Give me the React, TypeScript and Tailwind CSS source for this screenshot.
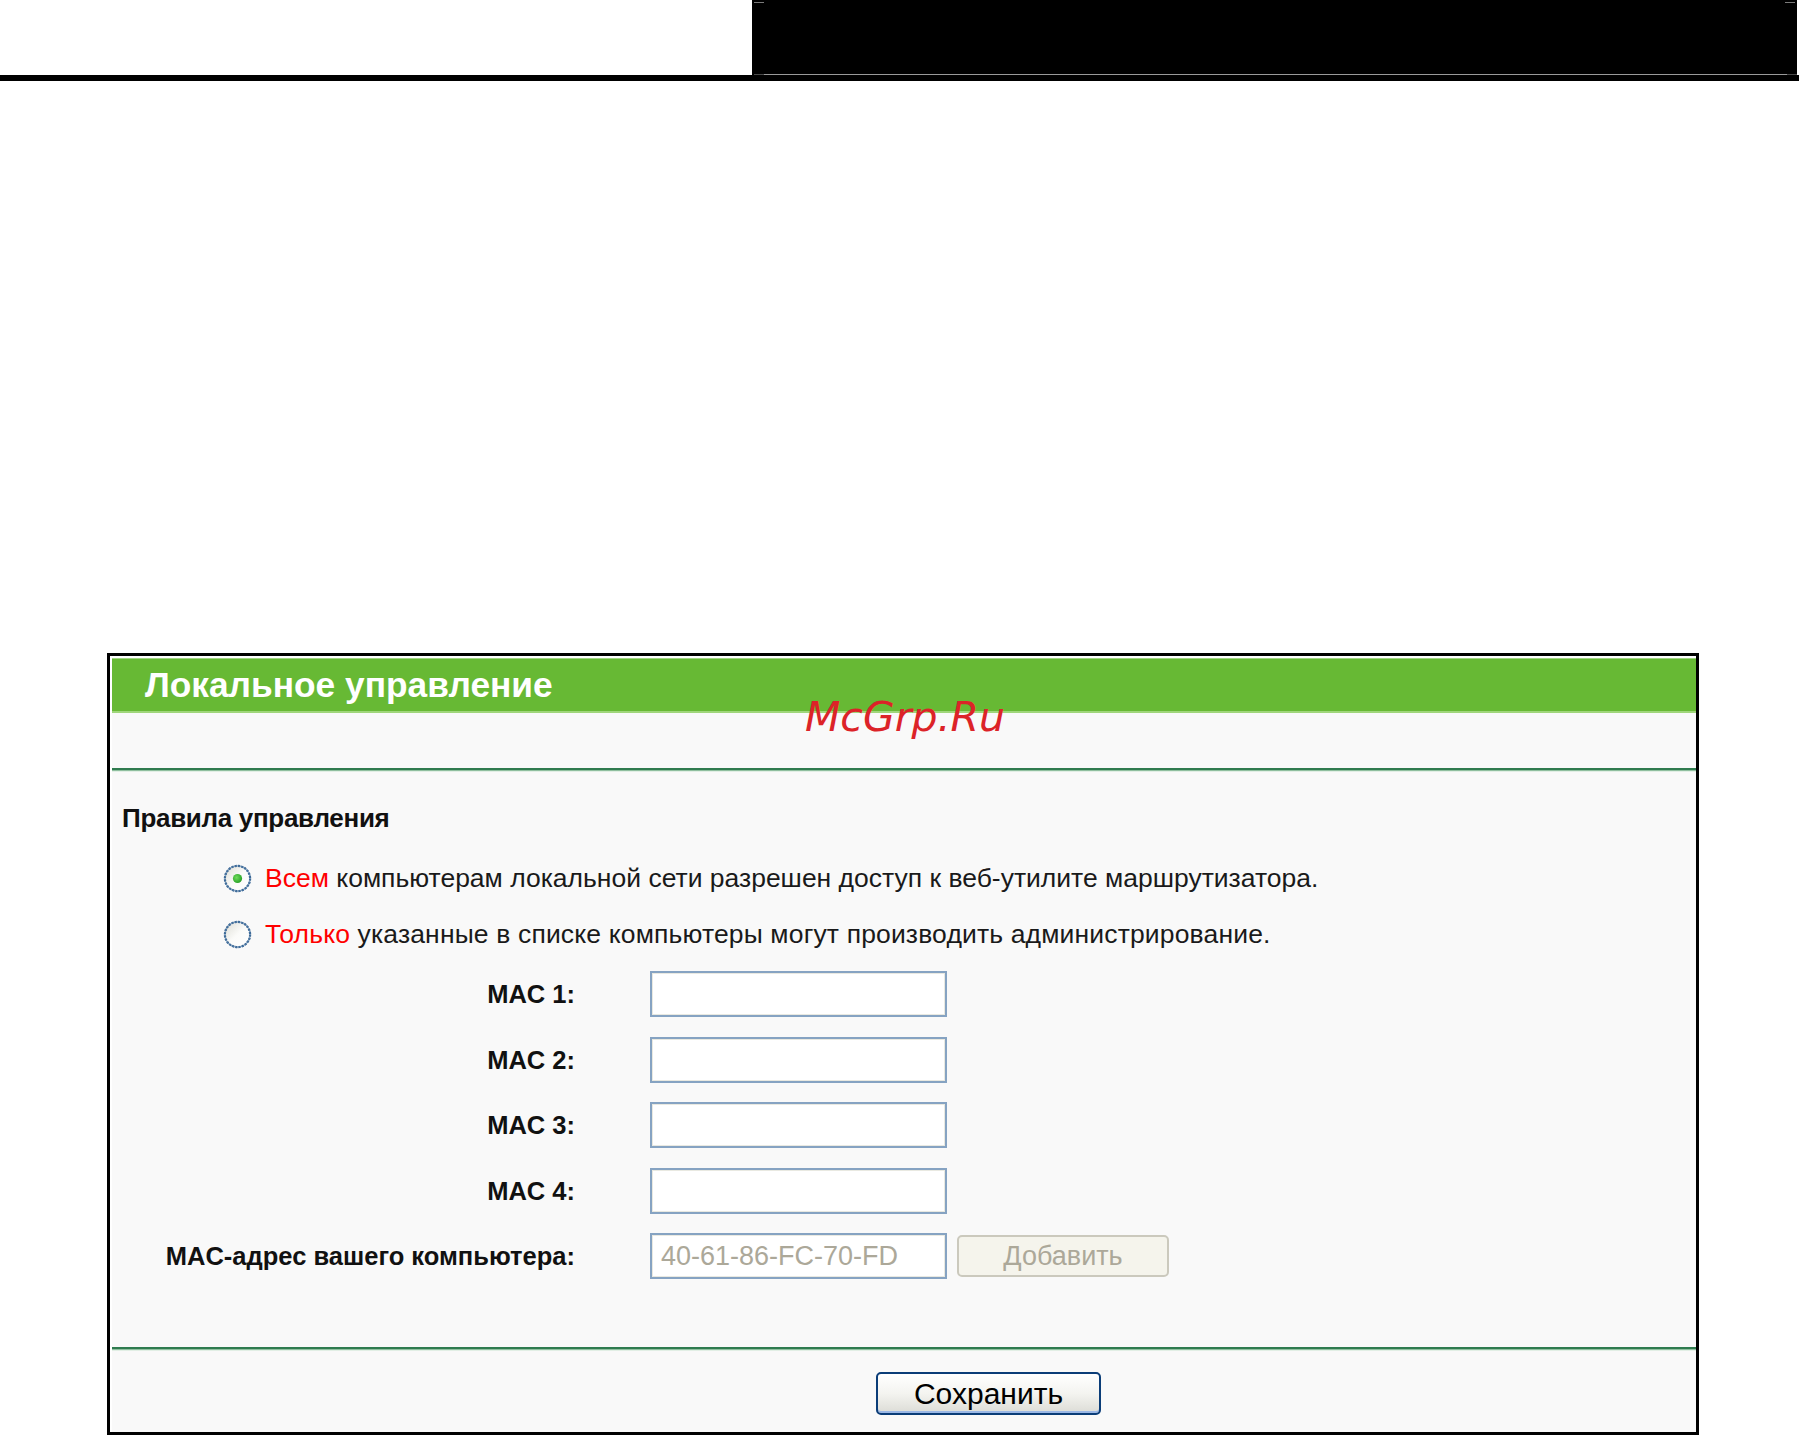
import React from "react";

function Radio({ checked }: { checked: boolean }) {
  return (
    <svg width="29" height="29" viewBox="0 0 29 29" className="shrink-0">
      <defs>
        <linearGradient id={checked ? "rg1" : "rg2"} x1="0" y1="0" x2="1" y2="1">
          <stop offset="0" stopColor="#dcdcd4" />
          <stop offset="0.5" stopColor="#fbfbf9" />
          <stop offset="1" stopColor="#ffffff" />
        </linearGradient>
        <radialGradient id="gdot" cx="0.4" cy="0.4" r="0.7">
          <stop offset="0" stopColor="#6fdc5a" />
          <stop offset="1" stopColor="#1f9a1f" />
        </radialGradient>
      </defs>
      <circle cx="14.5" cy="14.5" r="12.6" fill={`url(#${checked ? "rg1" : "rg2"})`} stroke="#2a5a8c" strokeWidth="2.2" strokeDasharray="2.2 1.1" />
      <circle cx="14.5" cy="14.5" r="12.6" fill="none" stroke="#5d84ad" strokeWidth="1.2" opacity="0.7" />
      {checked && <circle cx="14.5" cy="14.5" r="4.6" fill="url(#gdot)" />}
    </svg>
  );
}

function Separator() {
  return (
    <div className="flex flex-col">
      <div className="h-[2px] bg-[#2f7b4f]" />
      <div className="h-px bg-[#8fbf9f]" />
      <div className="h-px bg-[#e2efe5]" />
    </div>
  );
}

function MacRow({ label, children }: { label: string; children: React.ReactNode }) {
  return (
    <div className="flex items-center h-[46px]">
      <div className="w-[463px] text-right font-bold text-[25.5px] text-[#111] leading-[30px]">{label}</div>
      <div className="ml-[75px] flex items-center">{children}</div>
    </div>
  );
}

function MacInput({ value, disabled }: { value?: string; disabled?: boolean }) {
  return (
    <div className="w-[297px] h-[46px] border-2 border-[#86a3c2] bg-white shadow-[inset_0_0_0_1px_#e9e9e1] flex items-center pl-[9px] text-[27px] text-[#aca899] leading-none">
      {disabled ? value : ""}
    </div>
  );
}

export default function App() {
  return (
    <div className="w-[1799px] h-[1435px] bg-white overflow-hidden" style={{ fontFamily: '"Liberation Sans", Arial, sans-serif' }}>
      {/* top bar */}
      <div className="flex h-[75px]">
        <div className="w-[752px] bg-white" />
        <div className="w-[1045px] bg-black flex flex-col justify-between">
          <div className="flex justify-between pt-[2px] px-[2px]">
            <div className="w-[10px] h-px bg-[#7a7a7a]" />
            <div className="w-[10px] h-px bg-[#7a7a7a]" />
          </div>
          <div className="flex h-px pl-[2px]">
            <div className="w-[10px] bg-[#4a4a4a]" />
            <div className="flex-1 bg-[#9a9a9a]" />
            <div className="w-[10px] bg-[#4a4a4a]" />
          </div>
        </div>
      </div>
      <div className="h-[6px] bg-black" />

      {/* panel */}
      <div className="mt-[572px] ml-[107px] w-[1592px] h-[782px] border-[3px] border-black bg-white">
        <div className="relative pl-[2px] pt-[2px] h-full flex flex-col">
          {/* watermark */}
          <div
            className="absolute left-[695px] top-[41px] text-[41px] leading-[41px] italic text-[#dc2328]"
            style={{ fontFamily: '"DejaVu Sans", sans-serif' }}
          >
            McGrp.Ru
          </div>

          <div className="flex-1 flex flex-col bg-[#f9f9f9]">
            {/* green header */}
            <div className="h-[55px] border-t border-[#a3d585] border-b-2 border-b-[#9fd67a] bg-[#67b934] flex items-center pl-[33px]">
              <span className="text-white font-bold text-[35.3px] leading-[40px]">Локальное управление</span>
            </div>

            <div className="h-[55px]" />
            <Separator />

            <div className="mt-[26px] h-[40px] flex items-center pl-[10px]">
              <span className="font-bold text-[26px] text-[#111] leading-[30px] tracking-[-0.3px]">Правила управления</span>
            </div>

            <div className="mt-[20px] h-[40px] flex items-center pl-[111px] gap-[13px]">
              <Radio checked />
              <span className="text-[26.5px] leading-[30px] text-[#1a1a1a]">
                <span className="text-[#ff0000]">Всем</span> компьютерам локальной сети разрешен доступ к веб-утилите маршрутизатора.
              </span>
            </div>

            <div className="mt-[16px] h-[40px] flex items-center pl-[111px] gap-[13px]">
              <Radio checked={false} />
              <span className="text-[26.5px] leading-[30px] text-[#1a1a1a] tracking-[0.15px]">
                <span className="text-[#ff0000]">Только</span> указанные в списке компьютеры могут производить администрирование.
              </span>
            </div>

            <div className="mt-[17px] flex flex-col gap-[19.5px]">
              <MacRow label="MAC 1:">
                <MacInput />
              </MacRow>
              <MacRow label="MAC 2:">
                <MacInput />
              </MacRow>
              <MacRow label="MAC 3:">
                <MacInput />
              </MacRow>
              <MacRow label="MAC 4:">
                <MacInput />
              </MacRow>
              <MacRow label="MAC-адрес вашего компьютера:">
                <MacInput value="40-61-86-FC-70-FD" disabled />
                <div className="ml-[10px] w-[212px] h-[42px] rounded-[5px] border-2 border-[#cbc9bd] bg-[#f5f4ec] flex items-center justify-center text-[27px] text-[#aca899] leading-none">
                  Добавить
                </div>
              </MacRow>
            </div>

            <div className="mt-[68px]">
              <Separator />
            </div>

            <div className="mt-[21px] pl-[764px]">
              <div className="w-[225px] h-[43px] rounded-[5px] border-2 border-[#0b3d78] bg-gradient-to-b from-white via-[#f4f4f0] to-[#dcdcd6] shadow-[inset_0_-2px_0_#9bb8e6,inset_0_2px_0_#ffffff] flex items-center justify-center text-[30px] text-black leading-none">
                Сохранить
              </div>
            </div>
          </div>
        </div>
      </div>
    </div>
  );
}
